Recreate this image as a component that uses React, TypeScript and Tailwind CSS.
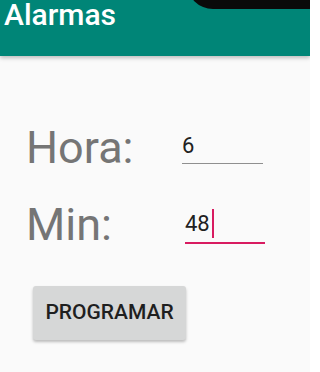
import React from "react";

const font = { fontFamily: "Roboto, 'Noto Sans', sans-serif" };

const Field = ({
  value,
  focused,
  width,
}: {
  value: string;
  focused?: boolean;
  width: string;
}) => {
  return (
    <div className={`flex flex-col ${width}`}>
      <div className="text-[22px] leading-[22px] text-[#212121]">
        <span className="relative inline-block">
          {value}
          {focused && (
            <span className="absolute left-[calc(100%+2px)] top-[-3.5px] h-[29px] w-[2px] bg-[#d81b60]"></span>
          )}
        </span>
      </div>
      {focused ? (
        <div className="mt-[7.5px] h-[2px] w-full bg-[#d81b60]"></div>
      ) : (
        <div className="mt-[6px] h-[1.5px] w-full bg-[#8f8f8f]"></div>
      )}
    </div>
  );
};

export default function App() {
  return (
    <section className="w-[310px] h-[372px] bg-[#fafafa] flex flex-col overflow-hidden" style={font}>
      {/* toolbar */}
      <div className="relative z-10 h-[56px] bg-[#008577] pl-[4px] shadow-[0_2px_4px_rgba(0,0,0,0.25)]">
        <h1 className="text-[30px] leading-[30px] font-medium text-white">Alarmas</h1>
        {/* camera notch */}
        <div className="absolute left-[187px] top-[-20px] h-[29px] w-[130px] rounded-bl-[26px] bg-[#0a0a0a]"></div>
      </div>

      <div className="flex flex-col pl-[26px] pt-[69px]">
        <div className="flex items-start">
          <span className="w-[156px] text-[45px] leading-[45px] text-[#757575]">Hora:</span>
          <div className="mt-[9.5px]">
            <Field value="6" width="w-[81px]" />
          </div>
        </div>
        <div className="flex items-start mt-[32px]">
          <span className="w-[159px] text-[45px] leading-[45px] text-[#757575]">Min:</span>
          <div className="mt-[10.5px]">
            <Field value="48" focused width="w-[80px]" />
          </div>
        </div>
        <button className="ml-[7px] mt-[39px] h-[54px] w-[153px] rounded-[3px] bg-[#d6d7d7] text-[21px] font-medium text-[#1f1f1f] shadow-[0_2px_3px_rgba(0,0,0,0.25)]">
          PROGRAMAR
        </button>
      </div>
    </section>
  );
}
